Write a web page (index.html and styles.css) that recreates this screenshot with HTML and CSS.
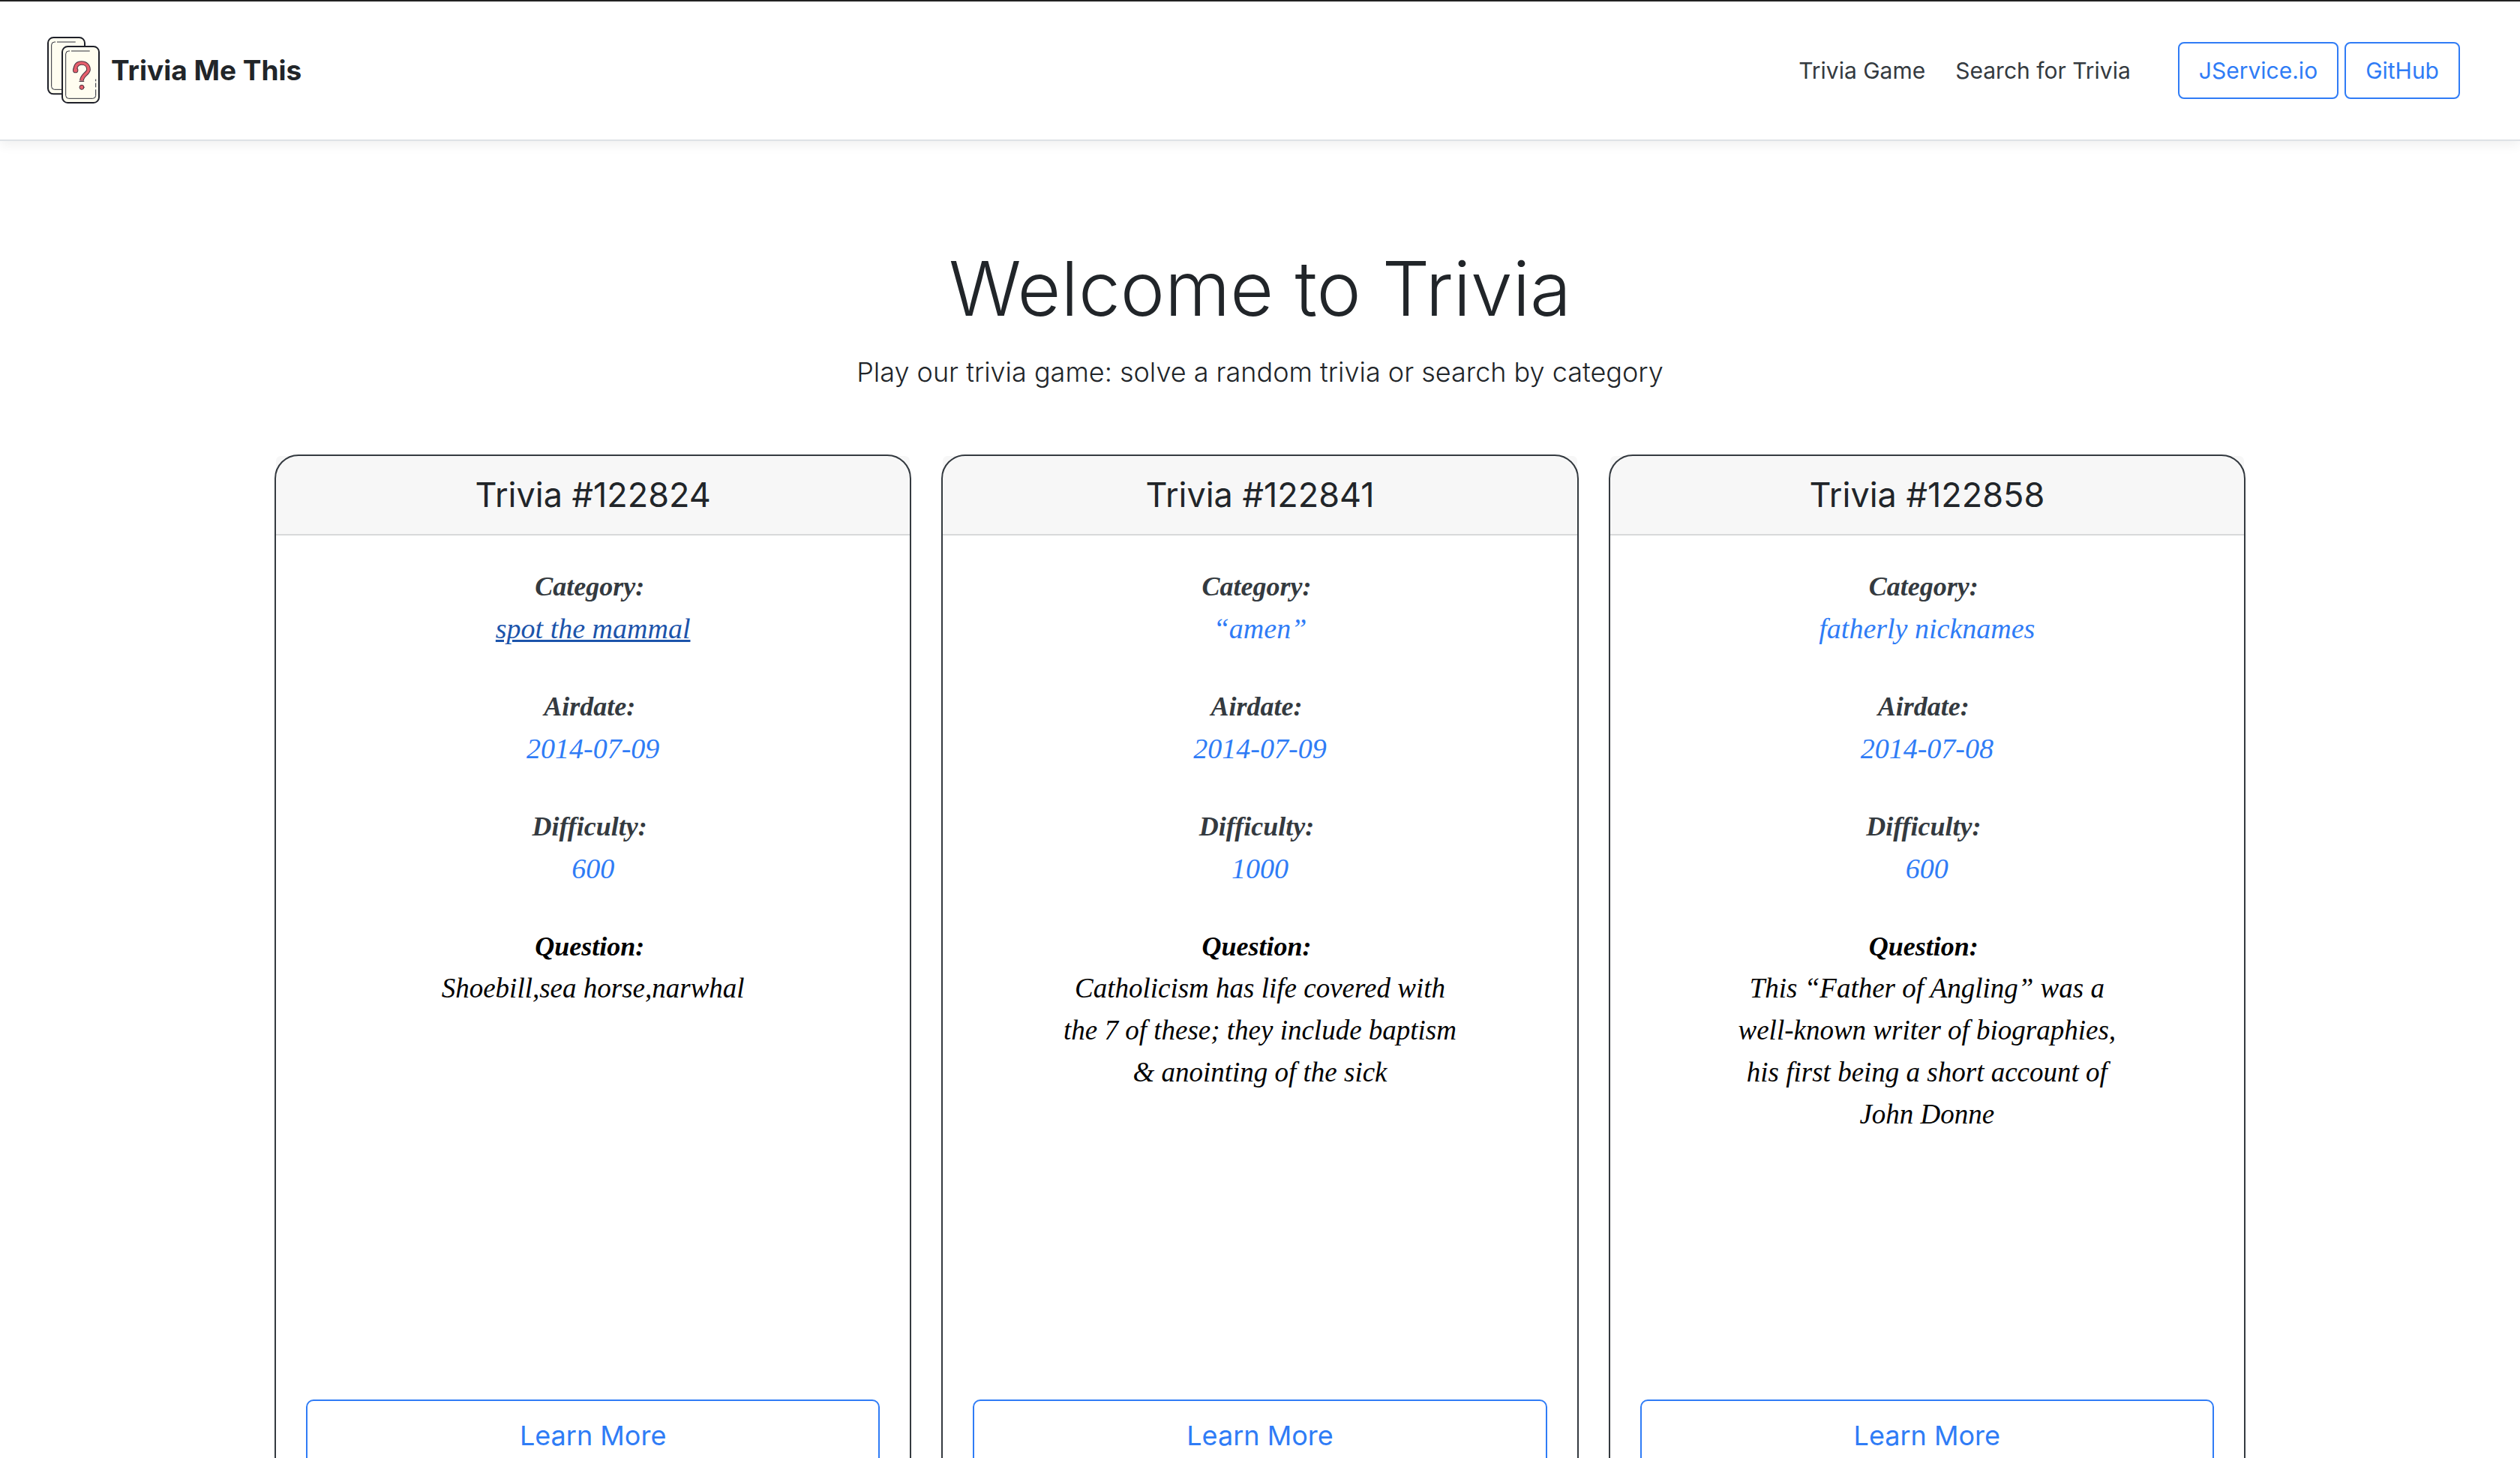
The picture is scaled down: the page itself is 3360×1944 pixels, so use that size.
FILE: index.html
```html
<!DOCTYPE html>
<html lang="en">
<head>
<meta charset="utf-8">
<title>Trivia Me This</title>
<link rel="stylesheet" href="styles.css">
</head>
<body>
<header class="topbar">
  <a class="brand" href="#">
    <svg class="brand-icon" viewBox="69 148 210 267" fill="none" stroke-linecap="round" stroke-linejoin="round" aria-hidden="true">
      <rect x="72" y="151" width="147" height="226" rx="22" fill="#fffdf0" stroke="#1e2029" stroke-width="6"/>
      <path d="M109 169H181M101 169h-3q-12 0-12 12V347q0 12 12 12H130" stroke="#2d2e38" stroke-width="3"/>
      <rect x="129" y="187" width="147" height="225" rx="22" fill="#fffdf0" stroke="#1e2029" stroke-width="6"/>
      <path d="M166 205H238M158 205h-3q-12 0-12 12V383q0 12 12 12H251q12 0 12-12V360M263 349V334M263 325v-6" stroke="#2d2e38" stroke-width="3"/>
      <path d="M180 284C181 263 190 253 206 253C223 253 234 264 234 279C234 295 208 300 207 323" stroke="#4a3440" stroke-width="17" stroke-linecap="butt"/>
      <circle cx="182" cy="282" r="11" fill="#4a3440"/>
      <path d="M181 284C181 263 190 253 206 253C223 253 234 264 234 279C234 295 208 300 207 323" stroke="#e65f6b" stroke-width="11" stroke-linecap="butt"/>
      <circle cx="182" cy="282" r="8" fill="#e65f6b"/>
      <path d="M198 326h17" stroke="#4a3440" stroke-width="4"/>
      <circle cx="207" cy="350" r="9" fill="#e65f6b" stroke="#4a3440" stroke-width="3"/>
    </svg>
    <span>Trivia Me This</span>
  </a>
  <nav class="links">
    <a class="nav-link" href="#">Trivia Game</a>
    <a class="nav-link" href="#">Search for Trivia</a>
  </nav>
  <div class="actions">
    <a class="btn" href="#">JService.io</a>
    <a class="btn" href="#">GitHub</a>
  </div>
</header>
<main>
  <section class="hero">
    <h1>Welcome to Trivia</h1>
    <p>Play our trivia game: solve a random trivia or search by category</p>
  </section>
  <section class="cards">
    <article class="card">
      <h2 class="card-header">Trivia #122824</h2>
      <div class="card-body">
        <p class="fact"><strong>Category:&nbsp;</strong><a class="active" href="#">spot the mammal</a></p>
        <p class="fact"><strong>Airdate:&nbsp;</strong><a href="#">2014-07-09</a></p>
        <p class="fact"><strong>Difficulty:&nbsp;</strong><a href="#">600</a></p>
        <p class="question"><strong>Question:&nbsp;</strong>Shoebill,sea horse,narwhal</p>
        <button class="btn btn-block" type="button">Learn More</button>
      </div>
    </article>
    <article class="card">
      <h2 class="card-header">Trivia #122841</h2>
      <div class="card-body">
        <p class="fact"><strong>Category:&nbsp;</strong><a href="#">“amen”</a></p>
        <p class="fact"><strong>Airdate:&nbsp;</strong><a href="#">2014-07-09</a></p>
        <p class="fact"><strong>Difficulty:&nbsp;</strong><a href="#">1000</a></p>
        <p class="question"><strong>Question:&nbsp;</strong>Catholicism has life covered with the 7 of these; they include baptism &amp; anointing of the sick</p>
        <button class="btn btn-block" type="button">Learn More</button>
      </div>
    </article>
    <article class="card">
      <h2 class="card-header">Trivia #122858</h2>
      <div class="card-body">
        <p class="fact"><strong>Category:&nbsp;</strong><a href="#">fatherly nicknames</a></p>
        <p class="fact"><strong>Airdate:&nbsp;</strong><a href="#">2014-07-08</a></p>
        <p class="fact"><strong>Difficulty:&nbsp;</strong><a href="#">600</a></p>
        <p class="question"><strong>Question:&nbsp;</strong>This “Father of Angling” was a well-known writer of biographies, his first being a short account of John Donne</p>
        <button class="btn btn-block" type="button">Learn More</button>
      </div>
    </article>
  </section>
</main>
</body>
</html>
```
FILE: styles.css
```css
* { box-sizing: border-box; }

body {
  margin: 0;
  height: 100vh;
  overflow-y: auto;
  scrollbar-width: none;
  background: #fff;
  color: #212529;
  font-family: Inter, "Liberation Sans", sans-serif;
  font-size: 32px;
  line-height: 48px;
}

h1, h2, p { margin: 0; }
a { color: #2f7cf6; text-decoration: none; }

.topbar {
  display: flex;
  align-items: center;
  padding: 47px 80px 48px 63px;
  border-top: 2px solid #222;
  border-bottom: 2px solid #dee2e6;
  box-shadow: 0 6px 14px rgba(0, 0, 0, .06);
}

.brand {
  display: flex;
  align-items: center;
  gap: 15px;
  margin-right: auto;
  color: #212529;
  font-size: 37px;
  font-weight: 700;
}
.brand-icon { width: 70px; height: 89px; }

.links { display: flex; gap: 40px; margin-right: 63px; }
.nav-link { color: #343a40; font-size: 30px; }

.actions { display: flex; gap: 8px; }
.btn {
  padding: 12px 26px;
  border: 2px solid #2f7cf6;
  border-radius: 8px;
  background: #fff;
  color: #2f7cf6;
  font: inherit;
  font-size: 30px;
}

.hero {
  padding: 130px 32px 80px;
  text-align: center;
  font-weight: 300;
}
.hero h1 {
  margin-bottom: 14px;
  font-size: 100px;
  font-weight: 300;
  line-height: 134px;
}
.hero p { font-size: 36px; line-height: 60px; }

.cards {
  display: grid;
  grid-template-columns: repeat(3, 1fr);
  gap: 40px;
  max-width: 2628px;
  margin: 0 auto;
  padding-bottom: 96px;
}

.card {
  border: 2px solid #343a40;
  border-radius: 32px;
  text-align: center;
}
.card-header {
  padding: 24px 40px;
  border-bottom: 2px solid #d8d9da;
  border-radius: 6px 6px 0 0;
  background: rgba(0, 0, 0, .03);
  font-size: 45px;
  font-weight: 400;
  line-height: 56px;
}
.card-body {
  padding: 40px;
  color: #000;
  font-family: "Liberation Serif", serif;
  font-size: 38px;
  font-style: italic;
  line-height: 56px;
}
.card-body strong { display: block; font-size: 36px; }
.fact { margin-bottom: 48px; }
.fact strong { color: #343a40; }
.active { color: #1c54ab; text-decoration: underline; }
.question {
  max-width: 540px;
  min-height: 632px;
  margin: 0 auto;
  font-size: 37px;
}
.btn-block {
  width: 100%;
  padding: 16px 32px;
  border-radius: 10px;
  font-family: Inter, "Liberation Sans", sans-serif;
  font-size: 36px;
  font-style: normal;
  line-height: 60px;
}
```
